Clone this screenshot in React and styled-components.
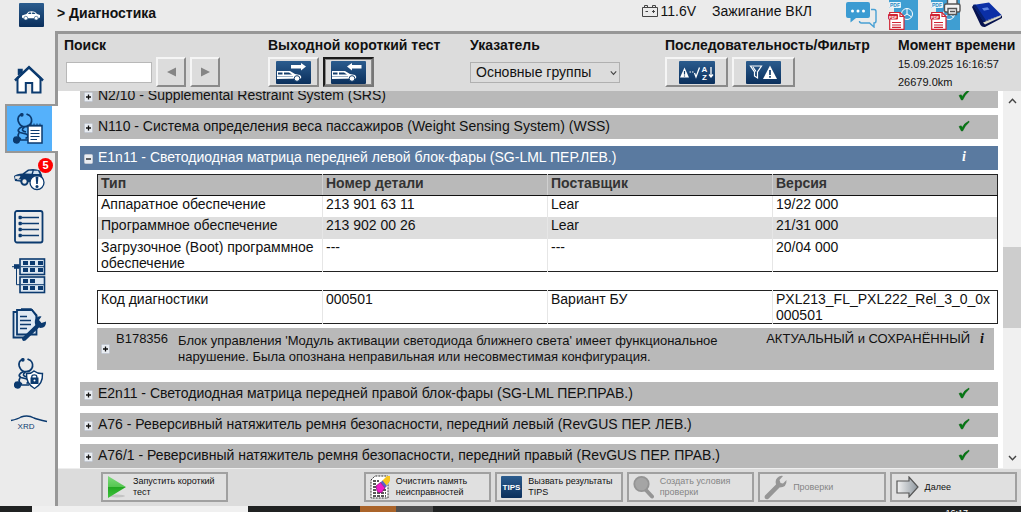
import { useState } from "react";
import styled, { createGlobalStyle } from "styled-components";

const GlobalStyle = createGlobalStyle`
  * {
    box-sizing: border-box;
  }

  body {
    margin: 0;
    background: #ebebeb;
    color: #111;
    font-family: "Liberation Sans", Arial, sans-serif;
    font-size: 14px;
    line-height: 16px;
  }

  button, input, select {
    font-family: inherit;
    color: inherit;
  }

  svg {
    display: block;
    flex: none;
  }
`;

const Page = styled.div`
  display: flex;
  flex-direction: column;
  height: 100vh;
  overflow: hidden;
`;

const TopBar = styled.header`
  display: flex;
  align-items: flex-start;
  height: 31px;
  flex: none;
  padding: 0 18px 0 19px;
`;

const Logo = styled.div`
  margin: 3px 13px 0 0;
`;

const Title = styled.h1`
  margin: 5px auto 0 0;
  font-size: 14px;
  font-weight: bold;
  line-height: 16px;
`;

const Status = styled.div`
  display: flex;
  align-items: center;
  gap: 3px;
  margin: 3px 16px 0 0;
  font-size: 14px;
  white-space: nowrap;
`;

const Tools = styled.div`
  display: flex;
  gap: 11px;
  margin-left: 18px;
`;

const IconButton = styled.button`
  display: block;
  padding: 0;
  border: none;
  background: none;
  cursor: pointer;
`;

const Body = styled.div`
  display: flex;
  flex: 1;
  min-height: 0;
`;

const Sidebar = styled.nav`
  display: flex;
  flex-direction: column;
  width: 58px;
  flex: none;
`;

const Spacer = styled.div`
  flex: ${(props) => (props.$grow ? "1" : "none")};
  height: ${(props) => (props.$grow ? "auto" : "24px")};
  border-right: 3px solid #979797;
`;

const NavItem = styled.a`
  position: relative;
  display: flex;
  align-items: center;
  justify-content: center;
  height: 49px;
  padding-left: 3px;
  color: #0b3a6f;
  border-right: 3px solid #979797;

  &[aria-current] {
    margin-left: 5px;
    padding: 0 9px 0 0;
    background: linear-gradient(to right, #55b1fb calc(100% - 6px), #fff 0);
    border: 2px solid #979797;
    border-right: none;
  }
`;

const Badge = styled.span`
  position: absolute;
  top: 5px;
  right: 2px;
  width: 15px;
  height: 15px;
  border-radius: 50%;
  background: #f00;
  color: #fff;
  font-size: 11px;
  font-weight: bold;
  line-height: 15px;
  text-align: center;
`;

const Main = styled.main`
  display: flex;
  flex-direction: column;
  flex: 1;
  min-width: 0;
  border-top: 3px solid #979797;
  background: #fff;
`;

const FilterBar = styled.div`
  display: grid;
  grid-template-columns: 204fr 202fr 195fr 233fr 123fr;
  flex: none;
  height: 57px;
  padding-left: 6px;
  background: #dcdcdc;
`;

const Group = styled.div`
  min-width: 0;
  white-space: nowrap;
`;

const Label = styled.label`
  display: block;
  height: 23px;
  padding-top: 3px;
  font-weight: bold;
`;

const Controls = styled.div`
  display: flex;
  align-items: center;
  gap: 4px;
  height: 30px;
`;

const SearchInput = styled.input`
  width: 86px;
  height: 21px;
  margin-left: 2px;
  padding: 0 4px;
  border: 1px solid #b8b8b8;
  background: #fff;
  font-size: 13px;
`;

const BevelButton = styled.button`
  display: flex;
  align-items: center;
  justify-content: center;
  width: ${(props) => props.$width}px;
  height: 30px;
  padding: 0;
  border: 2px solid;
  border-color: #f5f5f5 #8a8a8a #8a8a8a #f5f5f5;
  background: #dcdcdc;
  cursor: pointer;

  &[aria-pressed="true"] {
    border-color: #1c1c1c #777 #777 #1c1c1c;
    box-shadow: inset 0 0 0 1px #8a8a8a;
  }
`;

const SelectWrap = styled.div`
  position: relative;
  width: 150px;
`;

const Select = styled.select`
  display: block;
  width: 100%;
  height: 21px;
  padding: 0 5px;
  appearance: none;
  border: 1px solid #b0b0b0;
  border-radius: 0;
  background: #dcdcdc;
  font-size: 14px;
`;

const SelectArrow = styled.div`
  position: absolute;
  top: 8px;
  right: 3px;
  pointer-events: none;
`;

const Moment = styled.div`
  margin-top: -2px;
  font-size: 11px;
  line-height: 18px;
`;

const Content = styled.div`
  display: flex;
  flex: 1;
  min-height: 0;
`;

const List = styled.div`
  display: flex;
  flex-direction: column;
  justify-content: flex-end;
  gap: 7px;
  flex: 1;
  min-width: 0;
  overflow: hidden;
  padding: 0 5px 0 22px;
`;

const Row = styled.div`
  display: flex;
  align-items: center;
  gap: 5px;
  flex: none;
  height: 24px;
  padding: 0 28px 2px 4px;
  background: ${(props) => (props.$open ? "#5a7aa0" : "#b9b9b9")};
  color: ${(props) => (props.$open ? "#fff" : "#111")};
  white-space: nowrap;
`;

const RowTitle = styled.span`
  flex: 1;
`;

const Toggle = styled.button`
  display: block;
  flex: none;
  margin-top: 4px;
  padding: 0;
  border: none;
  background: none;
`;

const Info = styled.span`
  width: 12px;
  font-family: "Liberation Serif", "Times New Roman", serif;
  font-size: 14px;
  font-style: italic;
  font-weight: bold;
  line-height: 16px;
  text-align: center;
`;

const Details = styled.div`
  flex: none;
  margin-top: -3px;
  padding: 0 0 5px 17px;
`;

const Table = styled.table`
  width: 100%;
  margin-bottom: ${(props) => props.$gap}px;
  border-collapse: collapse;
  table-layout: fixed;
  border: 1px solid #222;

  th {
    height: 21px;
    padding: 0 0 0 3px;
    border-bottom: 1px solid #111;
    border-right: 1px solid #d0d0d0;
    background: #b9b9b9;
    color: #333;
    text-align: left;
    vertical-align: top;
  }

  td {
    height: 22px;
    padding: 0 0 0 3px;
    border-right: 1px solid #e6e6e6;
    vertical-align: top;
    word-break: break-word;
  }

  th:last-child,
  td:last-child {
    border-right: 1px solid #222;
  }

  tbody tr:nth-child(even) td {
    background: #dedede;
  }
`;

const Fault = styled.div`
  display: flex;
  align-items: flex-start;
  min-height: 42px;
  margin-right: 4px;
  padding: 3px 6px 0 4px;
  background: #b9b9b9;
  font-size: 13px;
`;

const FaultToggle = styled(Toggle)`
  margin-top: 13px;
`;

const FaultCode = styled.span`
  width: 62px;
  margin-left: 6px;
  flex: none;
`;

const FaultText = styled.p`
  flex: 1;
  margin: 2px 12px 0 0;
`;

const FaultState = styled.span`
  margin-right: 6px;
  white-space: nowrap;
`;

const Scrollbar = styled.div`
  display: flex;
  flex-direction: column;
  align-items: center;
  width: 18px;
  flex: none;
  padding: 7px 0;
  background: #f0f0f0;
`;

const Track = styled.div`
  flex: ${(props) => props.$share};
`;

const Thumb = styled.div`
  width: 100%;
  height: 81px;
  background: #cdcdcd;
`;

const Footer = styled.footer`
  display: grid;
  grid-template-columns: repeat(7, 1fr);
  gap: 4px;
  flex: none;
  height: 38px;
  padding: 3px 4px 4px 43px;
  border-top: 1px solid #eee;
  background: #dcdcdc;
`;

const Action = styled.button`
  display: flex;
  align-items: center;
  gap: 6px;
  min-width: 0;
  height: 30px;
  padding: 0 4px;
  border: 2px solid #a0a0a0;
  background: #e0e0e0;
  color: ${(props) => (props.disabled ? "#858585" : "#111")};
  font-size: 9px;
  line-height: 11px;
  text-align: left;
  white-space: pre;

  &:nth-child(2) {
    grid-column: 3;
  }
`;

const Taskbar = styled.div`
  display: flex;
  flex: none;
  height: 6px;
  overflow: hidden;
  background: #202222;
  color: #fff;
`;

const Segment = styled.div`
  width: ${(props) => props.$width}px;
  background: ${(props) => props.$color};
`;

const Clock = styled.span`
  margin: 3px 53px 0 auto;
  font-size: 9px;
  line-height: 9px;
`;

const navy = "#0b3a6f";

function Tile({ width, height, children }) {
  return (
    <svg width={width} height={height} viewBox={`0 0 ${width} ${height}`}>
      <defs>
        <linearGradient id="tile" x1="0" y1="0" x2="0" y2="1">
          <stop offset="0" stopColor="#2b5c8e" />
          <stop offset="1" stopColor="#0a2f5c" />
        </linearGradient>
      </defs>
      <rect width={width} height={height} rx="1" fill="url(#tile)" />
      {children}
    </svg>
  );
}

function LogoIcon() {
  return (
    <Tile width={25} height={24}>
      <path d="M3 12.5 L7.5 11 L9.5 8.8 Q13 7.8 16 9 L18 11 L21 12 V14.5 L19.5 15.3 H4 L3 14.5Z" fill="#fff" />
      <path d="M8.8 11 L10.2 9.4 H12.2 V11Z M13.1 9.4 H15.2 L16.6 11 H13.1Z" fill="#174877" />
      <circle cx="6.8" cy="15.2" r="1.9" fill="#fff" stroke="#174877" strokeWidth=".6" />
      <circle cx="17.2" cy="15.2" r="1.9" fill="#fff" stroke="#174877" strokeWidth=".6" />
    </Tile>
  );
}

function BatteryIcon() {
  return (
    <svg width="16" height="12" viewBox="0 0 16 12" fill="none" stroke="#444">
      <path d="M.5 2.5 H15.5 V11.5 H.5Z M2.5 2 V.5 H5.5 V2 M10.5 2 V.5 H13.5 V2 M3.5 6.5 H6 M10 6.5 H13 M11.5 5 V8" />
    </svg>
  );
}

function ChatIcon() {
  return (
    <svg width="31" height="26" viewBox="0 0 31 26">
      <path d="M25 7.5 H28 Q30 7.5 30 9.5 V19 Q30 21 28 21 V25 L23.5 21 H15.5 Q13.5 21 13.5 19" fill="none" stroke="#48a0d4" strokeWidth="1.4" />
      <path d="M2 0 H22 Q24 0 24 2 V14 Q24 16 22 16 H10 L4.5 20.5 V16 H2 Q0 16 0 14 V2 Q0 0 2 0Z" fill="#3b9bd2" />
      <g fill="#fff">
        <circle cx="6.5" cy="9" r="1.5" />
        <circle cx="12" cy="9" r="1.5" />
        <circle cx="17.5" cy="9" r="1.5" />
      </g>
    </svg>
  );
}

function PdfIcon({ printer }) {
  return (
    <svg width="31" height="30" viewBox="0 0 31 30">
      <path d="M1 0 H30 V30 H1Z" fill="#3f9ed2" />
      <path d="M0 8 H6 V30 H0Z" fill="#ebebeb" />
      <rect x="1" y="2" width="12" height="6" rx="1" fill="#eaf4fa" />
      <text x="2" y="7" fontSize="5" fontWeight="bold" fill="#2c8cc4">PDF</text>
      <g fill="none" stroke="#fff" strokeWidth="1">
        <circle cx="19" cy="14" r="5.5" />
        <path d="M19 8.5 V14 L14.4 17 M19 14 L23.6 17" />
      </g>
      <path d="M1.7 12.5 H12 L16 16.5 V29.3 H1.7Z" fill="#fff" stroke="#cf2534" strokeWidth="1.2" />
      <path d="M4 22.5 H13 M4 25 H13 M4 27.4 H13 M12 12.5 V16.5 H16" fill="none" stroke="#cf2534" strokeWidth="1.2" />
      <rect x="0" y="14" width="10" height="5.5" rx="1" fill="#cf2534" />
      <text x="1" y="18.6" fontSize="4" fontWeight="bold" fill="#fff">PDF</text>
      {printer && (
        <g fill="#f4f4f4" stroke="#555" strokeWidth="1.4">
          <path d="M17.5 5 V-1 H27 V5" />
          <rect x="14.5" y="4" width="15.5" height="8" rx="1.5" />
          <path d="M18 8.5 H26.5 V14.5 H18Z M20 11.5 H25" />
        </g>
      )}
    </svg>
  );
}

function BookIcon() {
  return (
    <svg width="31" height="28" viewBox="0 0 31 28">
      <path d="M0 6 L2 3.5 L13 20 L30 14.5 V17 L13 26 Q10 26.5 8.5 24Z" fill="#06124f" />
      <path d="M11 21.5 L28.5 14.5 L29 16 L13 23.5Z" fill="#d8d8c8" />
      <path d="M1 4 L17 1.5 L29.5 14 L11.5 20.5Z" fill="#0b2fa6" />
      <path d="M1 4 L3.5 3.6 L14 19.6 L11.5 20.5Z" fill="#07206f" />
      <path d="M10 7.3 L15.5 6.3 L17.5 8.5 L12 9.8Z" fill="#5c82df" />
    </svg>
  );
}

function HomeIcon() {
  return (
    <svg width="30" height="30" viewBox="0 0 30 30">
      <path d="M4.5 10 V4.5 H8 V8" fill={navy} stroke={navy} strokeWidth="1.5" />
      <path d="M3.5 13 V27.5 H11.8 V18 H18.2 V27.5 H26.5 V13 L15 2.5Z" fill="#fff" stroke={navy} strokeWidth="2" />
      <path d="M1 15.5 L15 2.2 L29 15.5" fill="none" stroke={navy} strokeWidth="2.5" />
    </svg>
  );
}

function Stethoscope() {
  return (
    <g fill="none" stroke={navy} strokeWidth="1.7">
      <path d="M8.5 1.2 Q4.2 3 5.2 8 Q6.5 12.5 10 13.5 Q15.5 14.5 17.8 10.5 Q20 6 16.5 2.5 L13.5 1" />
      <path d="M9.5 13.5 Q2.5 17 7 19.5 L13 21 Q17.5 23 12.5 25.5 M11.5 14 Q6.5 17.5 13 19 M6 20 Q3.5 24 8 26 M3 27 H15" />
      <circle cx="3.5" cy="27" r="2.8" fill={navy} />
      <circle cx="8.8" cy="1.8" r="1" fill={navy} />
    </g>
  );
}

function DiagnosisIcon() {
  return (
    <svg width="31" height="31" viewBox="0 0 31 31">
      <Stethoscope />
      <path d="M15 12.5 H29 V30 H15Z" fill="#fff" stroke={navy} strokeWidth="1.5" />
      <path d="M15 13 H29 M17.5 17.5 H26.5 M17.5 20.5 H26.5 M17.5 23.5 H26.5 M17.5 26.5 H24" stroke={navy} strokeWidth="1.2" />
      <path d="M18 12 V10.5 M21 12 V10.5 M24 12 V10.5 M27 12 V10.5" stroke={navy} />
    </svg>
  );
}

function CarAlertIcon() {
  return (
    <svg width="32" height="28" viewBox="0 0 32 28">
      <path d="M1 12 Q4 9.5 9.5 9.5 L15 5.5 Q22 4 27 6.5 L29 11 L30 18 H10 L2 17Z" fill={navy} />
      <path d="M12 9.5 L16 6.8 H19.5 L18.5 9.8Z M20.8 6.8 H25 L26.5 10 H20Z" fill="#cfe0ef" />
      <path d="M2.5 12.5 L7 12.2 L6 14.5 H2.5Z M4 15.5 L14 16.2" fill="#ebebeb" stroke="#ebebeb" strokeWidth=".7" />
      <circle cx="11.5" cy="17.5" r="3.2" fill="#ebebeb" stroke={navy} strokeWidth="2" />
      <circle cx="24" cy="18.5" r="7" fill="#fff" stroke={navy} strokeWidth="1.3" />
      <path d="M22.6 12.5 H25.4 L24.8 20 H23.2Z" fill={navy} />
      <circle cx="24" cy="22.5" r="1.5" fill={navy} />
    </svg>
  );
}

function ListIcon() {
  return (
    <svg width="30" height="34" viewBox="0 0 30 34">
      <rect x="1" y="1" width="27.5" height="31.5" rx="2" fill="none" stroke={navy} strokeWidth="1.8" />
      {[7.5, 13.5, 19.5, 25.5].map((y) => (
        <g key={y}>
          <rect x="4.5" y={y - 1.7} width="3.4" height="3.4" rx="1" fill={navy} />
          <path d={`M8 ${y} H25`} stroke={navy} strokeWidth="1.5" />
        </g>
      ))}
    </svg>
  );
}

const networkBoxes = [
  [11, 3], [18, 3], [26, 3],
  [11, 10], [18, 10], [26, 10],
  [11, 21], [18, 21],
  [11, 28], [18, 28], [26, 28],
];

function NetworkIcon() {
  return (
    <svg width="34" height="36" viewBox="0 0 34 36">
      <g fill="#dce7f2" stroke={navy} strokeWidth="1.6">
        <rect x="8" y="1" width="24.5" height="15.5" />
        <rect x="8" y="19" width="24.5" height="15.5" />
      </g>
      <path d="M0 8.7 H8 M4.5 9 V26.7 H8 M9 8.7 H32 M9 26.7 H32" fill="none" stroke={navy} strokeWidth="1" />
      {networkBoxes.map(([x, y]) => (
        <rect key={`${x}-${y}`} x={x} y={y} width="5" height="4" fill={navy} />
      ))}
      <rect x="2" y="6.2" width="5.5" height="4.6" fill={navy} />
    </svg>
  );
}

function RepairIcon() {
  return (
    <svg width="35" height="34" viewBox="0 0 35 34">
      <path d="M5 4 H1.5 V29.5 H14 M5 2 V26.5 H24.5 V8 L20 2Z" fill="#dfe9f3" stroke={navy} strokeWidth="1.8" />
      <path d="M9 1 H19 L24.5 7 V12 M8 8.5 H15 M8 12.5 H19 M8 16.5 H19 M8 20.5 H15" fill="none" stroke={navy} strokeWidth="1.7" />
      <path d="M10 30 L23.5 17 Q21.5 12 25 9.5 Q27.5 7.5 29.5 8.5 L27 12 L29.5 15 L34 13.5 Q34.5 19.5 28.5 20 L27 19.5 L13.5 32.5 Q10 34 10 30Z" fill={navy} />
    </svg>
  );
}

function ShieldIcon() {
  return (
    <svg width="30" height="32" viewBox="0 0 30 32">
      <Stethoscope />
      <path d="M20 13 Q24 16 28.5 15.5 Q29 26 20.5 30.5 Q12 26 12.5 15.5 Q17 16 20 13Z" fill="#fff" stroke={navy} strokeWidth="1.4" />
      <path d="M17.8 20 V18.5 Q18 16.8 20.3 16.8 Q22.7 16.8 22.8 18.5 V20" fill="none" stroke={navy} strokeWidth="1.3" />
      <rect x="16.5" y="19.5" width="8" height="6.5" fill={navy} />
      <circle cx="20.5" cy="22.5" r="1" fill="#fff" />
    </svg>
  );
}

function XrdIcon() {
  return (
    <svg width="38" height="16" viewBox="0 0 38 16">
      <path d="M1 5.5 Q8 4 11 2 Q18 -.5 24 3 Q27 4.2 37 6.5" fill="none" stroke={navy} strokeWidth="1.4" />
      <text x="16" y="14" fontSize="8" textAnchor="middle" fill={navy}>XRD</text>
    </svg>
  );
}

function CarTestIcon({ back }) {
  return (
    <Tile width={35} height={23}>
      <path
        d={back ? "M16 5.5 L21 2 V4 H30.5 V7.5 H21 V9.5Z" : "M30 5.5 L25 2 V4 H15 V7.5 H25 V9.5Z"}
        fill="#fff"
      />
      <path d="M1 10 H14 L19 13 L24 14 Q26 15.5 25 17.5 L1 18Z" fill="#fff" />
      <path d="M2 11.5 H6.5 V13.5 H2Z M8 11.5 H13 L16 13.5 H8Z" fill="#153f6d" />
      <circle cx="21" cy="17.5" r="2.8" fill="#fff" stroke="#153f6d" />
      <path d="M1 15.5 H17" stroke="#9ab0c6" />
    </Tile>
  );
}

function SortIcon() {
  return (
    <Tile width={36} height={23}>
      <path d="M1 16.5 L5.5 6.5 L10 16.5Z" fill="#fff" />
      <path d="M5.5 10 V13.5 M5.5 14.5 V15.5" stroke="#153f6d" strokeWidth="1.2" />
      <path d="M10.5 11 H15" stroke="#fff" strokeDasharray="1.5 1" />
      <path d="M15.5 12 L17 16 L20.5 6.5 M32 6 V16 M30 13.5 L32 16 L34 13.5" fill="none" stroke="#fff" strokeWidth="1.3" />
      <text x="22.5" y="10.5" fontSize="8" fontWeight="bold" fill="#fff">A</text>
      <text x="23" y="18.5" fontSize="8" fontWeight="bold" fill="#fff">Z</text>
    </Tile>
  );
}

function FilterIcon() {
  return (
    <Tile width={35} height={23}>
      <path d="M4.5 5 H15.5 L11.5 11 V17 L8.5 15 V11Z M7 6 L10 10.5" fill="none" stroke="#fff" strokeWidth="1.2" />
      <path d="M17 18 L24 4.5 L31 18Z" fill="#fff" />
      <path d="M24 9 V14 M24 15 V16.7" stroke="#153f6d" strokeWidth="1.7" />
    </Tile>
  );
}

function Chevron({ up, size = 9 }) {
  return (
    <svg width={size} height="6" viewBox="0 0 9 6">
      <path d={up ? "M1 5 L4.5 1.2 L8 5" : "M1 1 L4.5 4.8 L8 1"} fill="none" stroke="#444" strokeWidth="1.4" />
    </svg>
  );
}

function ArrowIcon({ left }) {
  return (
    <svg width="9" height="10" viewBox="0 0 9 10">
      <path d={left ? "M9 .5 V9.5 L0 5Z" : "M0 .5 V9.5 L9 5Z"} fill="#858585" />
    </svg>
  );
}

function ToggleIcon({ open }) {
  return (
    <svg width="9" height="10" viewBox="0 0 9 10">
      <rect x=".5" y=".5" width="8" height="9" rx="1" fill="#e9edf2" stroke="#c3c8d2" />
      <path d={open ? "M2 5 H7" : "M2 5 H7 M4.5 2.5 V7.5"} stroke="#111" strokeWidth="1.3" />
    </svg>
  );
}

function CheckIcon() {
  return (
    <svg width="12" height="12" viewBox="0 0 12 12">
      <path d="M1 6.5 L3.2 5.8 L4.3 7.5 Q6.5 3 11 1 L11 2.2 Q7 5.5 4.6 11 L3.4 11Z" fill="#057a14" stroke="#045c0f" strokeWidth=".5" />
    </svg>
  );
}

function PlayIcon() {
  return (
    <svg width="20" height="24" viewBox="0 0 20 24">
      <defs>
        <linearGradient id="play" x1="0" y1="0" x2="0" y2="1">
          <stop offset="0" stopColor="#7edb7c" />
          <stop offset=".5" stopColor="#55c650" />
          <stop offset=".52" stopColor="#23a822" />
          <stop offset="1" stopColor="#3fc33c" />
        </linearGradient>
      </defs>
      <ellipse cx="10" cy="21" rx="8" ry="1.5" fill="#c4c4c4" />
      <path d="M1 1 L19 12 L1 23Z" fill="url(#play)" />
    </svg>
  );
}

function EraseIcon() {
  return (
    <svg width="20" height="24" viewBox="0 0 20 24">
      <path d="M1 5 L5 1 H18 V23 H1Z" fill="#fff" stroke="#333" strokeDasharray="2 1" />
      <path d="M3 6 H9 M3 9 H7 M3 12 H6 M3 15 H7 M3 18 H16 M3 21 H16 M13 15 H17" stroke="#222" strokeWidth="1.3" strokeDasharray="3 1" />
      <path d="M12 6 L17 1 H20 V6 L16 11Z" fill="#f7c51c" />
      <path d="M10.5 7.5 L12.5 5.5 L17 11 L15 13Z" fill="#5a62c8" />
      <path d="M6 11 L10.5 7.5 L15 13 L11.5 17.5 Q8.5 18.5 7 16Z" fill="#f01cc8" stroke="#7d0c70" strokeWidth=".7" />
    </svg>
  );
}

function TipsIcon() {
  return (
    <Tile width={21} height={22}>
      <text x="10.5" y="14" fontSize="8" fontWeight="bold" textAnchor="middle" fill="#fff">TIPS</text>
    </Tile>
  );
}

function MagnifierIcon() {
  return (
    <svg width="21" height="24" viewBox="0 0 21 24">
      <path d="M12 14 L19 21.5" stroke="#959595" strokeWidth="4" strokeLinecap="round" />
      <circle cx="8.5" cy="9" r="7.2" fill="#a5a5a5" stroke="#949494" strokeWidth="1.8" />
    </svg>
  );
}

function WrenchIcon() {
  return (
    <svg width="23" height="25" viewBox="0 0 23 25">
      <path d="M1 20.5 L12 9.5 Q10.5 4 15 1.5 Q17 .5 19 1 L15.5 5 L16.5 8 L19 8.5 L22.5 5 Q23 12.5 15.5 12.5 L4.5 23.8 Q2.5 25 1 23.5 Q0 22 1 20.5Z" fill="#969696" />
    </svg>
  );
}

function NextIcon() {
  return (
    <svg width="23" height="22" viewBox="0 0 23 22">
      <defs>
        <linearGradient id="next" x1="0" y1="0" x2="1" y2="0">
          <stop offset="0" stopColor="#f2f2f2" />
          <stop offset="1" stopColor="#8e979f" />
        </linearGradient>
      </defs>
      <path d="M1 5 H13 V1 L22 11 L13 21 V17 H1Z" fill="url(#next)" stroke="#555" strokeWidth="1.2" />
    </svg>
  );
}

const navItems = [
  { name: "Главная", Icon: HomeIcon },
  { name: "Диагностика", Icon: DiagnosisIcon, current: true },
  { name: "Неисправности", Icon: CarAlertIcon, badge: 5 },
  { name: "Список", Icon: ListIcon },
  { name: "Топология", Icon: NetworkIcon },
  { name: "Ремонт", Icon: RepairIcon },
  { name: "Защита", Icon: ShieldIcon },
  { name: "XRD", Icon: XrdIcon },
];

const versions = [
  ["Аппаратное обеспечение", "213 901 63 11", "Lear", "19/22 000"],
  ["Программное обеспечение", "213 902 00 26", "Lear", "21/31 000"],
  ["Загрузочное (Boot) программное обеспечение", "---", "---", "20/04 000"],
];

const actions = [
  { text: "Запустить короткий\nтест", Icon: PlayIcon },
  { text: "Очистить память\nнеисправностей", Icon: EraseIcon },
  { text: "Вызвать результаты\nTIPS", Icon: TipsIcon },
  { text: "Создать условия\nпроверки", Icon: MagnifierIcon, disabled: true },
  { text: "Проверки", Icon: WrenchIcon, disabled: true },
  { text: "Далее", Icon: NextIcon },
];

function UnitRow({ title, open }) {
  return (
    <Row $open={open}>
      <Toggle aria-label={open ? "Свернуть" : "Развернуть"} aria-expanded={!!open}>
        <ToggleIcon open={open} />
      </Toggle>
      <RowTitle>{title}</RowTitle>
      {open ? <Info>i</Info> : <CheckIcon />}
    </Row>
  );
}

function App() {
  const [search, setSearch] = useState("");
  const [entryTest, setEntryTest] = useState(true);

  return (
    <Page>
      <GlobalStyle />
      <TopBar>
        <Logo>
          <LogoIcon />
        </Logo>
        <Title>&gt; Диагностика</Title>
        <Status>
          <BatteryIcon />
          11.6V
        </Status>
        <Status>Зажигание ВКЛ</Status>
        <Tools>
          <IconButton aria-label="Чат"><ChatIcon /></IconButton>
          <IconButton aria-label="PDF"><PdfIcon /></IconButton>
          <IconButton aria-label="Печать PDF"><PdfIcon printer /></IconButton>
          <IconButton aria-label="Справка"><BookIcon /></IconButton>
        </Tools>
      </TopBar>

      <Body>
        <Sidebar>
          <Spacer />
          {navItems.map(({ name, Icon, current, badge }) => (
            <NavItem key={name} href="#" aria-label={name} aria-current={current ? "page" : undefined}>
              <Icon />
              {badge && <Badge>{badge}</Badge>}
            </NavItem>
          ))}
          <Spacer $grow />
        </Sidebar>

        <Main>
          <FilterBar>
            <Group>
              <Label htmlFor="search">Поиск</Label>
              <Controls>
                <SearchInput id="search" type="text" value={search} onChange={(e) => setSearch(e.target.value)} />
                <BevelButton $width={30} aria-label="Назад"><ArrowIcon left /></BevelButton>
                <BevelButton $width={30} aria-label="Вперёд"><ArrowIcon /></BevelButton>
              </Controls>
            </Group>
            <Group>
              <Label as="div">Выходной короткий тест</Label>
              <Controls>
                <BevelButton $width={51} aria-label="Выходной тест" aria-pressed={!entryTest} onClick={() => setEntryTest(false)}>
                  <CarTestIcon />
                </BevelButton>
                <BevelButton $width={51} aria-label="Входной тест" aria-pressed={entryTest} onClick={() => setEntryTest(true)}>
                  <CarTestIcon back />
                </BevelButton>
              </Controls>
            </Group>
            <Group>
              <Label htmlFor="index">Указатель</Label>
              <Controls>
                <SelectWrap>
                  <Select id="index">
                    <option>Основные группы</option>
                  </Select>
                  <SelectArrow>
                    <Chevron size={7} />
                  </SelectArrow>
                </SelectWrap>
              </Controls>
            </Group>
            <Group>
              <Label as="div">Последовательность/Фильтр</Label>
              <Controls>
                <BevelButton $width={63} aria-label="Сортировка"><SortIcon /></BevelButton>
                <BevelButton $width={63} aria-label="Фильтр"><FilterIcon /></BevelButton>
              </Controls>
            </Group>
            <Group>
              <Label as="div">Момент времени</Label>
              <Moment>
                15.09.2025 16:16:57
                <br />
                26679.0km
              </Moment>
            </Group>
          </FilterBar>

          <Content>
            <List>
              <UnitRow title="N2/10 - Supplemental Restraint System (SRS)" />
              <UnitRow title="N110 - Система определения веса пассажиров (Weight Sensing System) (WSS)" />
              <UnitRow open title="E1n11 - Светодиодная матрица передней левой блок-фары (SG-LML ПЕР.ЛЕВ.)" />
              <Details>
                <Table $gap={18}>
                  <thead>
                    <tr>
                      <th>Тип</th>
                      <th>Номер детали</th>
                      <th>Поставщик</th>
                      <th>Версия</th>
                    </tr>
                  </thead>
                  <tbody>
                    {versions.map((row) => (
                      <tr key={row[0]}>
                        {row.map((cell, i) => (
                          <td key={i}>{cell}</td>
                        ))}
                      </tr>
                    ))}
                  </tbody>
                </Table>
                <Table $gap={4}>
                  <tbody>
                    <tr>
                      <td>Код диагностики</td>
                      <td>000501</td>
                      <td>Вариант БУ</td>
                      <td>PXL213_FL_PXL222_Rel_3_0_0x000501</td>
                    </tr>
                  </tbody>
                </Table>
                <Fault>
                  <FaultToggle aria-label="Развернуть" aria-expanded={false}>
                    <ToggleIcon />
                  </FaultToggle>
                  <FaultCode>B178356</FaultCode>
                  <FaultText>
                    Блок управления 'Модуль активации светодиода ближнего света' имеет функциональное
                    нарушение. Была опознана неправильная или несовместимая конфигурация.
                  </FaultText>
                  <FaultState>АКТУАЛЬНЫЙ и СОХРАНЁННЫЙ</FaultState>
                  <Info>i</Info>
                </Fault>
              </Details>
              <UnitRow title="E2n11 - Светодиодная матрица передней правой блок-фары (SG-LML ПЕР.ПРАВ.)" />
              <UnitRow title="A76 - Реверсивный натяжитель ремня безопасности, передний левый (RevGUS ПЕР. ЛЕВ.)" />
              <UnitRow title="A76/1 - Реверсивный натяжитель ремня безопасности, передний правый (RevGUS ПЕР. ПРАВ.)" />
            </List>
            <Scrollbar>
              <Chevron up />
              <Track $share={143} />
              <Thumb />
              <Track $share={127} />
              <Chevron />
            </Scrollbar>
          </Content>

          <Footer>
            {actions.map(({ text, Icon, disabled }) => (
              <Action key={text} disabled={disabled}>
                <Icon />
                {text}
              </Action>
            ))}
          </Footer>
        </Main>
      </Body>

      <Taskbar>
        <Segment $width={32} $color="#202222" />
        <Segment $width={216} $color="#f0f0f0" />
        <Segment $width={112} $color="#202222" />
        <Segment $width={36} $color="#aa642a" />
        <Segment $width={37} $color="#505050" />
        <Clock>16:17</Clock>
      </Taskbar>
    </Page>
  );
}

export default App;
